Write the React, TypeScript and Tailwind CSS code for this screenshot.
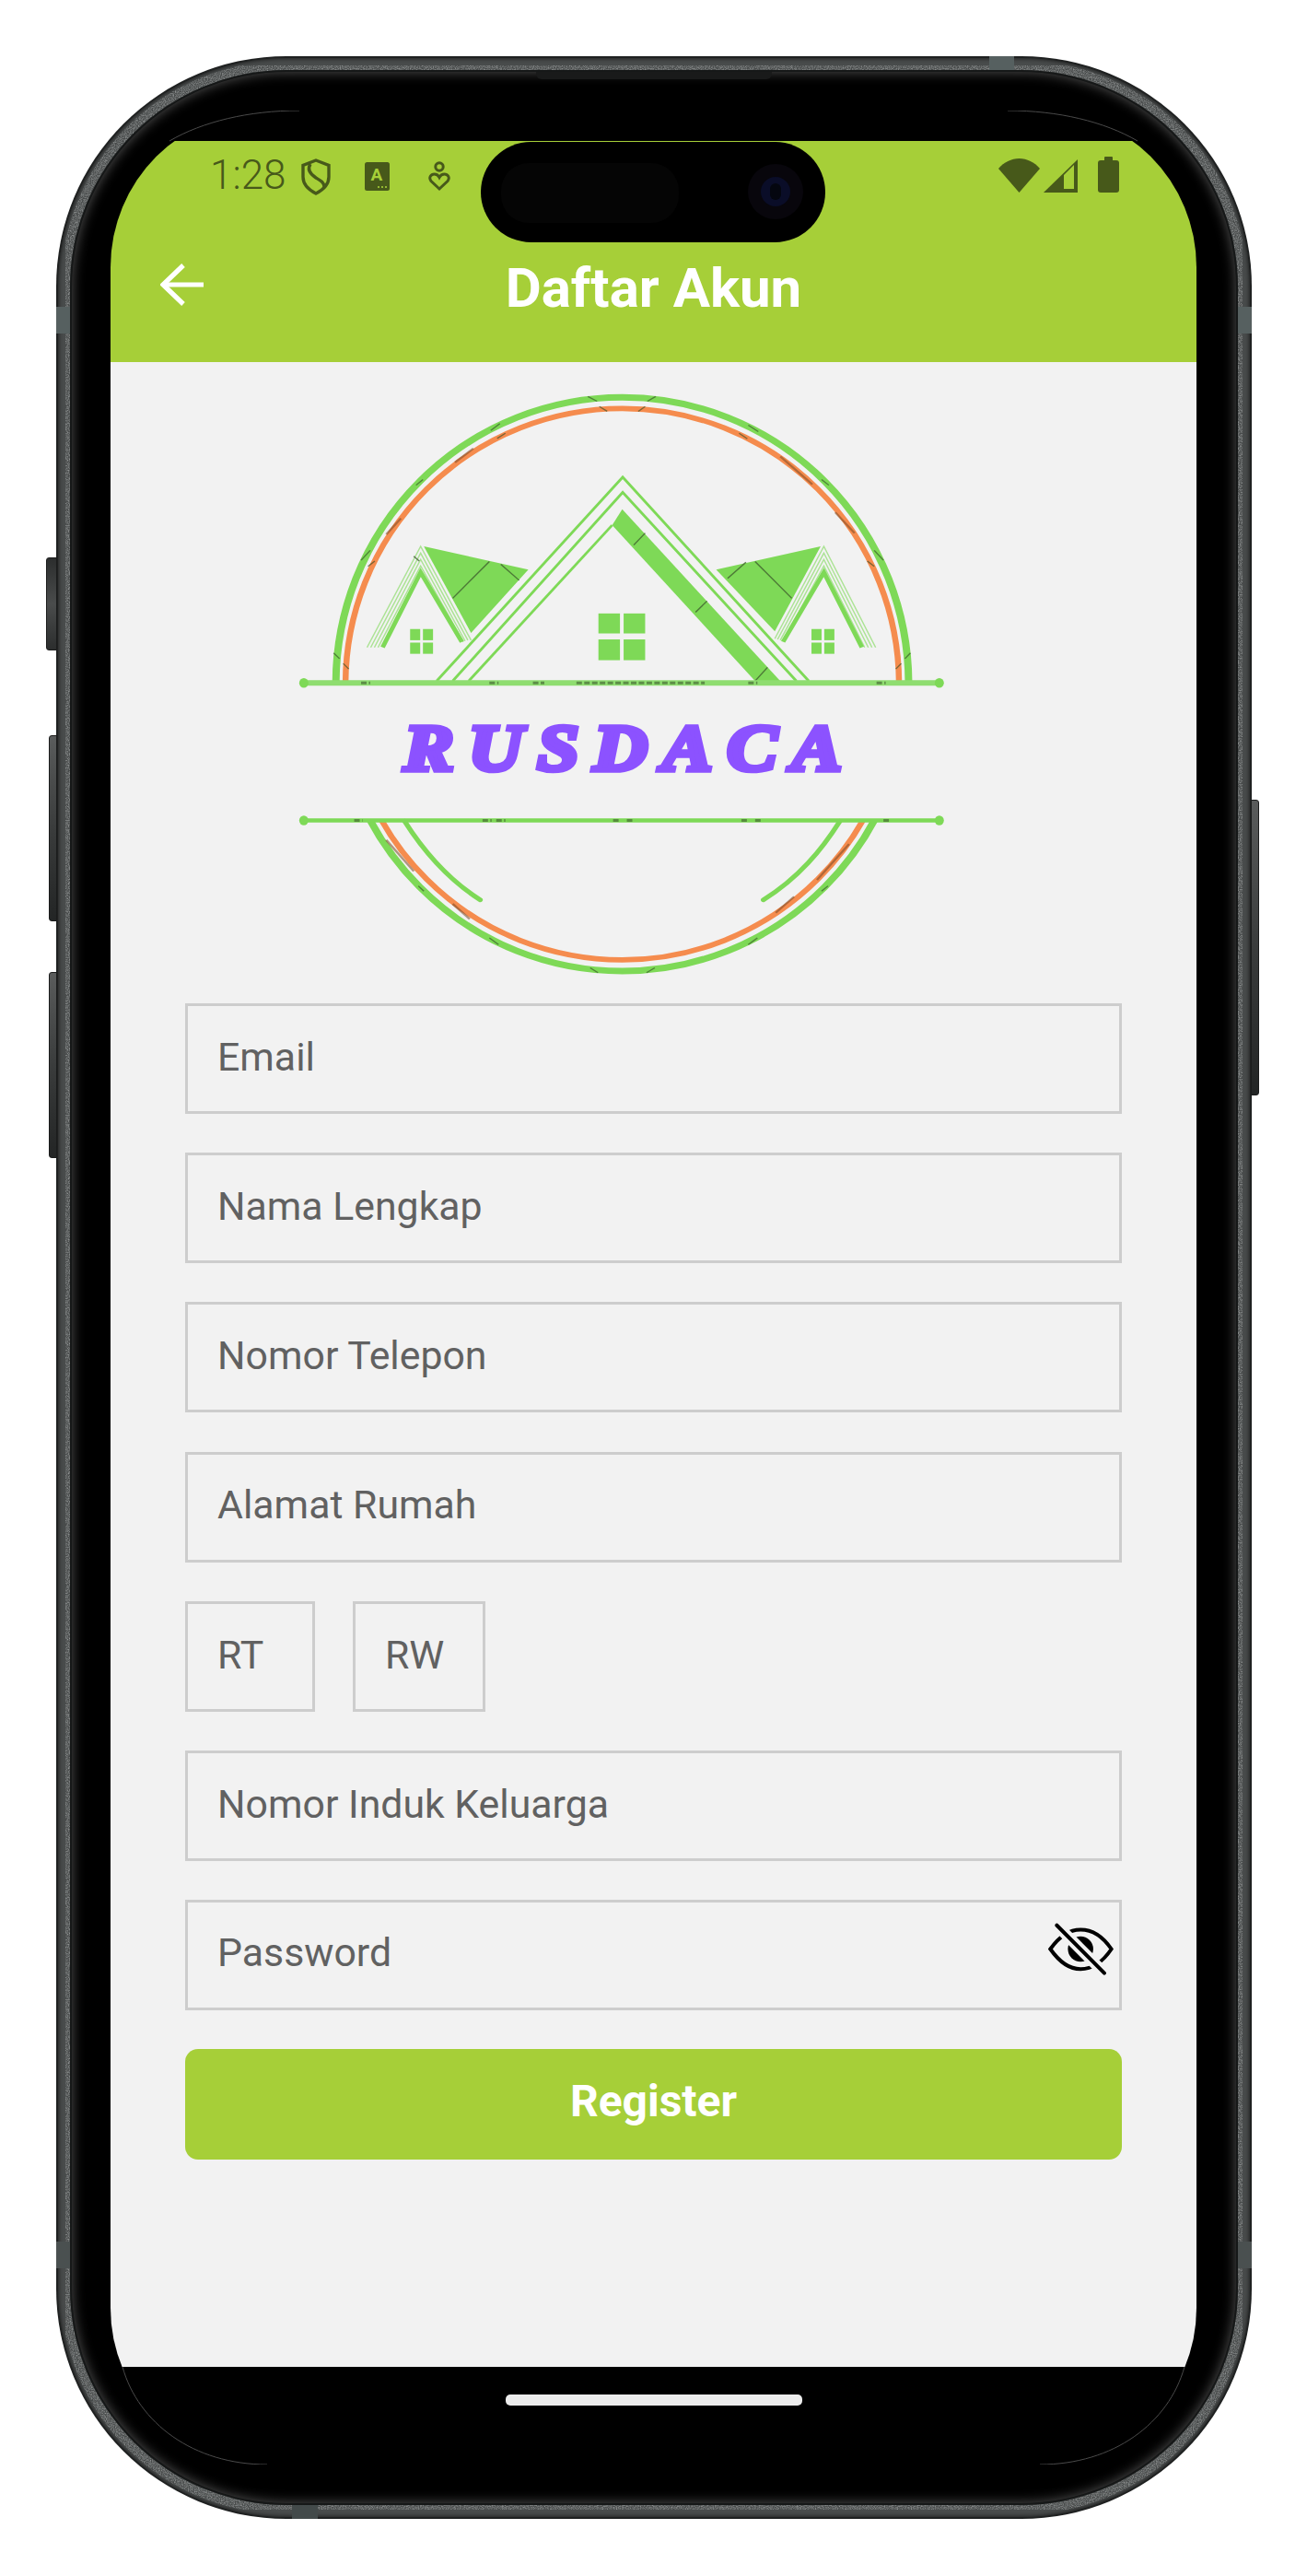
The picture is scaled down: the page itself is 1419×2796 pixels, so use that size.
const fields = ["Email", "Nama Lengkap", "Nomor Telepon", "Alamat Rumah"];

const ink = "#47591a";
const leaf = "#7ed957";

// dark specks left over from the blurry logo image, in logo viewBox units
const specks = [
  [680, 70, 700, 82], [810, 82, 828, 70], [705, 95, 722, 107], [790, 107, 805, 95], [468, 155, 488, 138],
  [1030, 142, 1052, 158], [482, 175, 500, 162], [1010, 162, 1028, 176], [305, 292, 320, 278], [1190, 278, 1206, 292],
  [185, 480, 205, 455], [1305, 455, 1325, 480], [200, 495, 215, 482], [1290, 482, 1305, 495], [125, 712, 138, 726],
  [1372, 726, 1384, 712], [146, 738, 158, 752], [1352, 752, 1364, 738], [310, 1295, 322, 1308], [1190, 1308, 1204, 1295],
  [465, 1425, 485, 1442], [1030, 1442, 1050, 1425], [685, 1500, 702, 1512], [808, 1512, 826, 1500],
];
const darkArcs = [
  [390, 235, 430, 200], [1100, 220, 1170, 290], [1220, 360, 1262, 412], [240, 415, 272, 375],
  [240, 1180, 300, 1258], [385, 1340, 422, 1378], [1090, 1362, 1130, 1322], [1180, 1280, 1250, 1190],
];
const lineTicks = [
  [185, 205, 787], [465, 485, 787], [560, 585, 787], [655, 935, 787], [1030, 1050, 787], [1310, 1330, 787],
  [170, 188, 1131], [450, 470, 1131], [480, 500, 1131], [735, 750, 1131], [765, 780, 1131],
  [1015, 1030, 1131], [1045, 1060, 1131], [1325, 1340, 1131],
];

function Logo() {
  return (
    <svg viewBox="0 0 1568 1568" preserveAspectRatio="none" className="block w-[780px] h-[680px] ml-[180px] mt-[7px] blur-[0.6px]">
      <defs>
        <clipPath id="rings">
          <rect x="0" y="0" width="1568" height="785" />
          <rect x="0" y="1131" width="1568" height="437" />
        </clipPath>
      </defs>
      <g clipPath="url(#rings)" fill="none">
        <ellipse cx="755" cy="790" rx="625" ry="718" stroke={leaf} strokeWidth="16" />
        <ellipse cx="755" cy="790" rx="604" ry="690" stroke="#f58c4e" strokeWidth="13" />
      </g>
      <g fill="none" stroke={leaf} strokeWidth="11" strokeLinecap="round">
        <path d="M280 1133 C320 1205 370 1275 445 1330" />
        <path d="M1230 1133 C1190 1205 1140 1275 1063 1330" />
      </g>

      <g fill="none" stroke={leaf} strokeWidth="6">
        <path d="M350 782 L756 272 L1162 782" />
        <path d="M385 782 L756 310 L1135 782" />
        <path d="M420 782 L733 392" />
      </g>
      <path d="M755 352 L1100 782 L1045 782 L733 392 Z" fill={leaf} />
      <g fill={leaf}>
        <rect x="703" y="613" width="47" height="50" />
        <rect x="758" y="613" width="47" height="50" />
        <rect x="703" y="678" width="47" height="52" />
        <rect x="758" y="678" width="47" height="52" />
        <path d="M322 445 L550 503 L425 662 Z" />
        <path d="M1188 445 L960 503 L1088 658 Z" />
        <rect x="292" y="652" width="22" height="28" />
        <rect x="320" y="652" width="22" height="28" />
        <rect x="292" y="686" width="22" height="28" />
        <rect x="320" y="686" width="22" height="28" />
        <rect x="1168" y="652" width="22" height="28" />
        <rect x="1196" y="652" width="22" height="28" />
        <rect x="1168" y="686" width="22" height="28" />
        <rect x="1196" y="686" width="22" height="28" />
      </g>
      <g fill="none" stroke={leaf}>
        <g strokeWidth="3" opacity="0.6">
          <path d="M198 698 L315 445 L425 680" />
          <path d="M206 698 L315 462 L418 680" />
          <path d="M214 698 L315 478 L412 682" />
          <path d="M222 698 L315 494 L408 684" />
          <path d="M1308 698 L1195 445 L1088 676" />
          <path d="M1300 698 L1195 462 L1094 678" />
          <path d="M1292 698 L1195 478 L1100 680" />
          <path d="M1284 698 L1195 494 L1106 682" />
        </g>
        <path d="M232 698 L315 510 L405 684" strokeWidth="10" />
        <path d="M1278 698 L1195 510 L1106 684" strokeWidth="10" />
      </g>

      <g stroke="#3c5a2c" strokeWidth="3" fill="none" opacity="0.75">
        <path d="M385 575 L465 483" />
        <path d="M490 490 L530 530" />
        <path d="M1045 483 L1125 575" />
        <path d="M985 525 L1025 485" />
        <path d="M780 442 L805 412" />
        <path d="M915 610 L940 582" />
        <path d="M1045 782 L1072 748" />
        <path d="M300 470 L312 482" />
      </g>

      <g stroke={leaf} strokeLinecap="round">
        <line x1="60" y1="787" x2="1447" y2="787" stroke="#8fdd70" strokeWidth="14" />
        <line x1="60" y1="1131" x2="1447" y2="1131" strokeWidth="10" />
      </g>
      <g fill={leaf}>
        <ellipse cx="60" cy="787" rx="10" ry="12" />
        <ellipse cx="1447" cy="787" rx="10" ry="12" />
        <ellipse cx="60" cy="1131" rx="10" ry="12" />
        <ellipse cx="1447" cy="1131" rx="10" ry="12" />
      </g>

      <g stroke="#2e4a22" strokeWidth="3" opacity="0.6" fill="none">
        {specks.map(([a, b, c, d]) => (
          <line key={`${a}-${b}`} x1={a} y1={b} x2={c} y2={d} />
        ))}
      </g>
      <g stroke="#7a4a26" strokeWidth="5" opacity="0.55" fill="none">
        {darkArcs.map(([a, b, c, d]) => (
          <line key={`${a}-${b}`} x1={a} y1={b} x2={c} y2={d} />
        ))}
      </g>
      <g stroke="#3c5a2c" strokeWidth="7" opacity="0.6" strokeDasharray="12 5">
        {lineTicks.map(([a, b, y]) => (
          <line key={`${a}-${y}`} x1={a} y1={y} x2={b} y2={y} />
        ))}
      </g>

      <text
        x="278"
        y="1006"
        textLength="956"
        lengthAdjust="spacing"
        fontSize="164"
        fontWeight="700"
        fontStyle="italic"
        fontFamily="'Liberation Serif', serif"
        fill="#8c52ff"
        stroke="#8c52ff"
        strokeWidth="13"
      >
        RUSDACA
      </text>
    </svg>
  );
}

function StatusBar() {
  return (
    <div className="h-[72px] flex items-start text-[#47591a]">
      <span className="ml-[108px] mt-[12px] w-[86px] text-[44px] leading-[50px] font-light">1:28</span>
      <svg viewBox="0 0 32 40" className="ml-[13px] mt-[19px] w-[32px] h-[40px]" fill="none" stroke={ink} strokeWidth="3.4">
        <path d="M16 2 L30 7.5 V20 C30 28 24 34 16 38 C8 34 2 28 2 20 V7.5 Z" />
        <path d="M10 6 C6 12 10 17 16 21 C21 24 25 26 25 31" />
      </svg>
      <svg viewBox="0 0 27 31" className="ml-[37px] mt-[23px] w-[27px] h-[31px]">
        <rect width="27" height="31" rx="2.5" fill={ink} />
        <text x="13" y="20" textAnchor="middle" fontSize="19" fontWeight="700" fontFamily="Roboto, sans-serif" fill="#a6cf38">A</text>
        <circle cx="15" cy="27" r="1.1" fill="#a6cf38" />
        <circle cx="19" cy="27" r="1.1" fill="#a6cf38" />
        <circle cx="23" cy="27" r="1.1" fill="#a6cf38" />
      </svg>
      <svg viewBox="0 0 24 33" className="ml-[42px] mt-[22px] w-[24px] h-[33px]" fill="none" stroke={ink} strokeWidth="3">
        <circle cx="12" cy="6" r="4.2" />
        <path d="M12 30 L3 21.5 C0 17.5 3 14 6.5 14 C9 14 11 15.5 12 17.5 C13 15.5 15 14 17.5 14 C21 14 24 17.5 21 21.5 Z" />
      </svg>
      <svg viewBox="0 0 45 37" className="ml-[595px] mt-[19px] w-[45px] h-[37px]" fill={ink}>
        <path d="M0 11 C6 4 14 0 22.5 0 C31 0 39 4 45 11 L22.5 37 Z" />
      </svg>
      <svg viewBox="0 0 37 36" className="ml-[4px] mt-[20px] w-[37px] h-[36px]">
        <path d="M37 0 V36 H0 Z" fill={ink} />
        <path d="M22 17 L33 6 V32 H22 Z" fill="#a6cf38" />
      </svg>
      <svg viewBox="0 0 23 39" className="ml-[22px] mt-[17px] w-[23px] h-[39px]" fill={ink}>
        <rect x="7" width="9" height="6" rx="1" />
        <rect y="4" width="23" height="35" rx="3" />
      </svg>
    </div>
  );
}

function Field({ label, className = "" }: { label: string; className?: string }) {
  return (
    <div className={`h-[120px] border-[3px] border-[#cdcdcd] flex items-center pl-[32px] pb-[4px] text-[42.8px] text-[#616161] ${className}`}>
      {label}
    </div>
  );
}

function EyeOff() {
  return (
    <svg viewBox="415 200 212 170" className="w-[71px] h-[57px] mb-[13px]" fill="none" strokeLinecap="round">
      <path d="M422 285 C450 245 485 222 520 222 C560 222 595 248 620 285 C595 322 560 350 520 350 C485 350 450 325 422 285 Z" stroke="#000" strokeWidth="12" />
      <circle cx="520" cy="285" r="41" fill="#000" />
      <line x1="443" y1="208" x2="597" y2="363" stroke="#f2f2f2" strokeWidth="36" strokeLinecap="butt" />
      <line x1="443" y1="208" x2="597" y2="363" stroke="#000" strokeWidth="12" />
    </svg>
  );
}

export default function App() {
  return (
    <div className="w-[1419px] h-[2796px] bg-white pt-[61px] pl-[61px] font-['Roboto',sans-serif]">
      {/* phone body */}
      <div className="relative w-[1298px] h-[2673px] rounded-[250px] bg-[#1f2121] p-[2px]">
        {/* side buttons */}
        <div className="absolute left-[-11px] top-[544px] w-[12px] h-[101px] rounded-l-[3px] bg-gradient-to-b from-[#2c2e2e] via-[#4a4c4c] to-[#2c2e2e] border border-[#1b1c1c]" />
        <div className="absolute left-[-8px] top-[737px] w-[9px] h-[202px] rounded-l-[3px] bg-gradient-to-b from-[#5a5c5c] via-[#3a3c3c] to-[#232525] border border-[#1b1c1c]" />
        <div className="absolute left-[-8px] top-[994px] w-[9px] h-[202px] rounded-l-[3px] bg-gradient-to-b from-[#5a5c5c] via-[#3a3c3c] to-[#232525] border border-[#1b1c1c]" />
        <div className="absolute right-[-8px] top-[807px] w-[9px] h-[321px] rounded-r-[3px] bg-gradient-to-b from-[#5a5c5c] via-[#3a3c3c] to-[#232525] border border-[#1b1c1c]" />

        <div className="relative w-full h-full rounded-[248px] bg-[#484b4b] p-[13px] shadow-[inset_0_0_5px_#111]">
          {/* brushed metal grain */}
          <svg className="absolute inset-0 w-full h-full pointer-events-none">
            <filter id="grain" x="0" y="0" width="100%" height="100%">
              <feTurbulence type="fractalNoise" baseFrequency="0.8" numOctaves="2" seed="4" />
              <feColorMatrix values="0 0 0 0 0.5  0 0 0 0 0.52  0 0 0 0 0.52  0 0 0 1.2 -0.4" />
              <feComposite in2="SourceAlpha" operator="in" />
            </filter>
            <rect x="8" y="8" width="1278" height="2653" rx="240" fill="none" stroke="#000" strokeWidth="10" filter="url(#grain)" />
          </svg>

          {/* antenna bands */}
          <div className="absolute left-[1011px] top-[-2px] w-[27px] h-[17px] bg-[#566060]" />
          <div className="absolute left-[254px] bottom-[-2px] w-[28px] h-[17px] bg-[#434a4a]" />
          <div className="absolute left-[-2px] top-[270px] w-[17px] h-[29px] bg-[#566060]" />
          <div className="absolute right-[-2px] top-[270px] w-[17px] h-[29px] bg-[#566060]" />
          <div className="absolute left-[-2px] top-[2370px] w-[17px] h-[29px] bg-[#4a5050]" />
          <div className="absolute right-[-2px] top-[2370px] w-[17px] h-[29px] bg-[#4a5050]" />

          <div className="relative w-full h-full rounded-[235px] bg-[#161818] p-[2px]">
            <div className="relative w-full h-full rounded-[233px] bg-black pt-[42px] pl-[42px] shadow-[inset_0_0_14px_#555]">
              {/* speaker slit */}
              <div className="absolute left-[504px] top-0 w-[256px] h-[8px] rounded-b-[6px] bg-[#191a1a]" />

              {/* screen */}
              <div className="relative w-[1179px] h-[2555px] rounded-[170px] overflow-hidden bg-black pt-[33px] flex flex-col">
                <header className="h-[240px] shrink-0 bg-[#a6cf38]">
                  <StatusBar />
                  <div className="h-[168px] grid grid-cols-[1fr_auto_1fr] items-center">
                    <svg viewBox="0 0 48 46" className="ml-[54px] w-[48px] h-[46px]" fill="none" stroke="#fff" strokeWidth="5.2">
                      <path d="M47 23 H4" />
                      <path d="M25 2 L3 23 L25 44" />
                    </svg>
                    <h1 className="pt-[7px] text-[60px] font-bold text-white">Daftar Akun</h1>
                    <div />
                  </div>
                </header>

                <main className="h-[2176px] shrink-0 bg-[#f2f2f2]">
                  <Logo />
                  <div className="mt-[9px] mx-[81px] flex flex-col gap-[42.2px]">
                    {fields.map((f) => (
                      <Field key={f} label={f} />
                    ))}
                    <div className="flex gap-[41px]">
                      <Field label="RT" className="w-[141px]" />
                      <Field label="RW" className="w-[144px]" />
                    </div>
                    <Field label="Nomor Induk Keluarga" />
                    <div className="h-[120px] border-[3px] border-[#cdcdcd] flex items-center justify-between pl-[32px] pr-[6px] text-[42.8px] text-[#616161]">
                      <span className="pb-[6px]">Password</span>
                      <EyeOff />
                    </div>
                    <button className="h-[120px] rounded-[14px] bg-[#a6cf38] text-[48px] font-bold text-white pb-[6px]">
                      Register
                    </button>
                  </div>
                </main>

                <div className="flex-1 flex justify-center pt-[30px]">
                  <div className="w-[322px] h-[12px] rounded-[5px] bg-[#ececec]" />
                </div>

                {/* camera cutout */}
                <div className="absolute left-[402px] top-[34px] w-[374px] h-[109px] rounded-full bg-black">
                  <div className="absolute left-[22px] top-[23px] w-[193px] h-[65px] rounded-[30px] bg-[#050505]" />
                  <div className="absolute left-[290px] top-[24px] w-[60px] h-[60px] rounded-full bg-[#08060c] flex items-center justify-center">
                    <div className="w-[32px] h-[32px] rounded-full bg-[#0a0d28] flex items-center justify-center">
                      <div className="w-[12px] h-[18px] rounded-full bg-[#04060f]" />
                    </div>
                  </div>
                </div>
              </div>

              {/* thin edge of the glass, only visible at the corners */}
              <svg className="absolute left-[42px] top-[42px] w-[1179px] h-[2555px] pointer-events-none" viewBox="0 0 1179 2555" fill="none" stroke="#4a4a4a" strokeWidth="1">
                <path d="M64 33 C100 12 150 0 205 0" />
                <path d="M1115 33 C1079 12 1029 0 974 0" />
                <path d="M13 2449 C30 2510 90 2555 170 2555" />
                <path d="M1166 2449 C1149 2510 1089 2555 1009 2555" />
              </svg>
            </div>
          </div>
        </div>
      </div>
    </div>
  );
}
